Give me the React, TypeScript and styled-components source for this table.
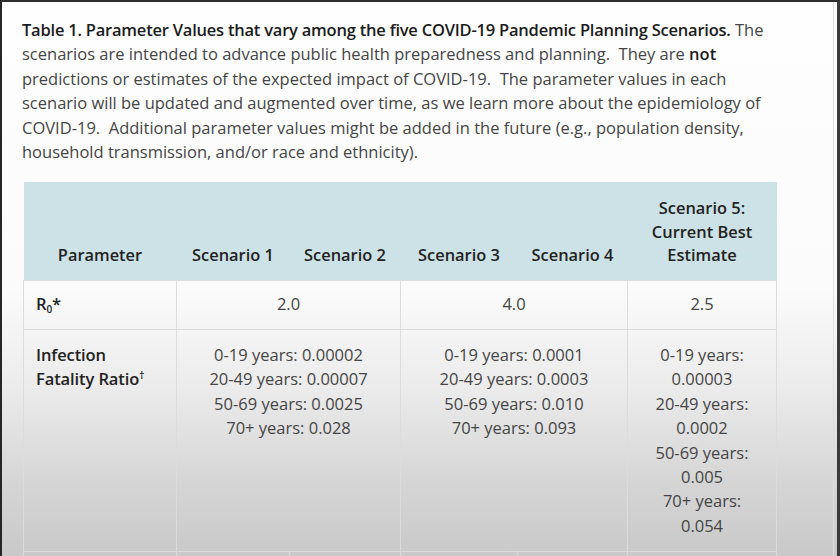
import React from "react";
import styled, { createGlobalStyle } from "styled-components";

const Global = createGlobalStyle`
  html, body { margin: 0; padding: 0; background: #2b2b2b; }
  * { box-sizing: border-box; }
`;

const Frame = styled.div`
  width: 840px;
  height: 556px;
  overflow: hidden;
  border-top: 2px solid #2e2e2e;
  border-left: 2px solid #262626;
  border-right: 3px solid #3a3a3a;
  background: linear-gradient(
    to bottom,
    #fefefe 0%,
    #fbfbfb 52%,
    #ebebeb 70%,
    #d6d6d6 86%,
    #c9c9c9 100%
  );
  font-family: "Open Sans", "DejaVu Sans", sans-serif;
`;

const Page = styled.div`
  height: 100%;
  border-right: 1px solid #dedede;
  margin-right: 3px;
  padding: 16px 0 0 20px;
`;

const Caption = styled.p`
  margin: 0;
  font-size: 16.5px;
  line-height: 24.4px;
  color: #454545;
  white-space: nowrap;
`;

const Strong = styled.span<{ $tight?: boolean }>`
  font-weight: 600;
  color: #1c1c1c;
  letter-spacing: ${(p) => (p.$tight ? "-0.22px" : "0")};
`;

const Table = styled.table`
  margin: 18px 0 0 1px;
  width: 753px;
  border-collapse: collapse;
  table-layout: fixed;
  font-size: 16.5px;
  color: #454545;
`;

const HeadCell = styled.th`
  background: #cde2e6;
  color: #222;
  font-weight: 600;
  font-size: 16.4px;
  line-height: 23.5px;
  text-align: center;
  vertical-align: bottom;
  padding: 12px 2px 13px;
  height: 98px;
`;

const Cell = styled.td<{ $align?: "left" | "center"; $pad?: string }>`
  border: 1px solid #dcdcdc;
  text-align: ${(p) => p.$align ?? "center"};
  vertical-align: top;
  line-height: 24.4px;
  padding: ${(p) => p.$pad ?? "13px 2px"};
  white-space: nowrap;
`;

const Label = styled(Cell)`
  color: #222;
  font-weight: 600;
  padding-left: 12px;
  letter-spacing: -0.1px;
`;

const Sub = styled.sub`
  font-size: 10px;
  vertical-align: -3px;
  line-height: 0;
`;

const Sup = styled.sup`
  font-size: 10px;
  vertical-align: 6px;
  line-height: 0;
`;

const Line = styled.span`
  display: block;
`;

const ShortRow = styled.tr`
  height: 49px;
`;

const TallRow = styled.tr`
  height: 221px;
`;

const StubRow = styled.tr`
  height: 60px;
`;

const Lines = ({ items }: { items: string[] }) => (
  <>
    {items.map((t, i) => (
      <Line key={i}>{t}</Line>
    ))}
  </>
);

export default function App() {
  return (
    <>
      <Global />
      <Frame>
        <Page>
          <Caption>
            <Strong $tight>
              Table 1. Parameter Values that vary among the five COVID-19
              Pandemic Planning Scenarios.
            </Strong>{" "}
            The
            <br />
            scenarios are intended to advance public health preparedness and
            planning.&nbsp; They are <Strong>not</Strong>
            <br />
            predictions or estimates of the expected impact of COVID-19.&nbsp;
            The parameter values in each
            <br />
            scenario will be updated and augmented over time, as we learn more
            about the epidemiology of
            <br />
            COVID-19.&nbsp; Additional parameter values might be added in the
            future (e.g., population density,
            <br />
            household transmission, and/or race and ethnicity).
          </Caption>
          <Table>
            <colgroup>
              <col style={{ width: 153 }} />
              <col style={{ width: 113 }} />
              <col style={{ width: 111 }} />
              <col style={{ width: 117 }} />
              <col style={{ width: 110 }} />
              <col style={{ width: 149 }} />
            </colgroup>
            <thead>
              <tr>
                <HeadCell>Parameter</HeadCell>
                <HeadCell>Scenario 1</HeadCell>
                <HeadCell>Scenario 2</HeadCell>
                <HeadCell>Scenario 3</HeadCell>
                <HeadCell>Scenario 4</HeadCell>
                <HeadCell>
                  Scenario 5:
                  <br />
                  Current Best
                  <br />
                  Estimate
                </HeadCell>
              </tr>
            </thead>
            <tbody>
              <ShortRow>
                <Label $align="left" $pad="11px 2px 12px 12px">
                  R<Sub>0</Sub>*
                </Label>
                <Cell colSpan={2} $pad="11px 2px 12px">
                  2.0
                </Cell>
                <Cell colSpan={2} $pad="11px 2px 12px">
                  4.0
                </Cell>
                <Cell $pad="11px 2px 12px">2.5</Cell>
              </ShortRow>
              <TallRow>
                <Label $align="left">
                  Infection
                  <br />
                  Fatality Ratio<Sup>†</Sup>
                </Label>
                <Cell colSpan={2}>
                  <Lines
                    items={[
                      "0-19 years: 0.00002",
                      "20-49 years: 0.00007",
                      "50-69 years: 0.0025",
                      "70+ years: 0.028",
                    ]}
                  />
                </Cell>
                <Cell colSpan={2}>
                  <Lines
                    items={[
                      "0-19 years: 0.0001",
                      "20-49 years: 0.0003",
                      "50-69 years: 0.010",
                      "70+ years: 0.093",
                    ]}
                  />
                </Cell>
                <Cell>
                  <Lines
                    items={[
                      "0-19 years:",
                      "0.00003",
                      "20-49 years:",
                      "0.0002",
                      "50-69 years:",
                      "0.005",
                      "70+ years:",
                      "0.054",
                    ]}
                  />
                </Cell>
              </TallRow>
              <StubRow>
                <Cell />
                <Cell />
                <Cell />
                <Cell />
                <Cell />
                <Cell />
              </StubRow>
            </tbody>
          </Table>
        </Page>
      </Frame>
    </>
  );
}
